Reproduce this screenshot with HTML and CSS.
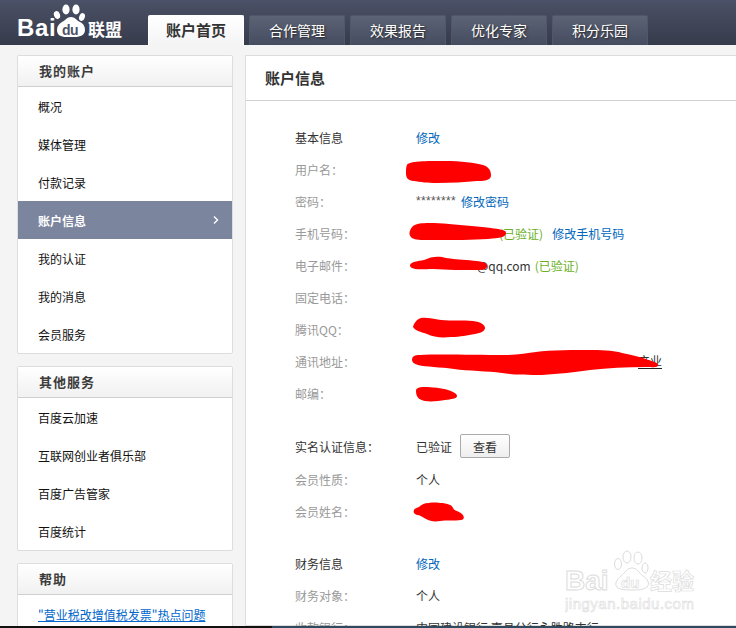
FILE: index.html
```html
<!DOCTYPE html>
<html lang="zh-CN">
<head>
<meta charset="utf-8">
<title>账户信息</title>
<link rel="stylesheet" href="styles.css">
</head>
<body>
<div class="page">
  <header class="topbar">
    <svg class="logo" width="110" height="45" viewBox="0 0 110 45">
      <text class="logo-bai" x="0" y="36">Bai</text>
      <ellipse cx="40" cy="15" rx="3" ry="4" fill="#fff" transform="rotate(-20 40 15)"/>
      <ellipse cx="49" cy="9.5" rx="3.6" ry="5" fill="#fff"/>
      <ellipse cx="59" cy="9.5" rx="3.6" ry="5" fill="#fff"/>
      <ellipse cx="65" cy="17" rx="2.8" ry="4" fill="#fff" transform="rotate(20 65 17)"/>
      <path d="M54 17c4 0 5 3 9 5 4 2 5 5 5 8 0 5-5 7-10 7H49c-5 0-9-2-9-7 0-4 2-6 5-8 4-2 5-5 9-5z" fill="#fff"/>
      <text class="logo-du" x="45" y="35">du</text>
      <text class="logo-lm" x="71" y="36">联盟</text>
    </svg>
    <nav class="tabs">
      <a class="tab tab-active">账户首页</a>
      <a class="tab">合作管理</a>
      <a class="tab">效果报告</a>
      <a class="tab">优化专家</a>
      <a class="tab">积分乐园</a>
    </nav>
  </header>

  <div class="body-row">
    <aside class="sidebar">
      <section class="card">
        <h3 class="card-title">我的账户</h3>
        <ul class="menu">
          <li class="menu-item">概况</li>
          <li class="menu-item">媒体管理</li>
          <li class="menu-item">付款记录</li>
          <li class="menu-item menu-active">账户信息
            <svg class="chev" width="6" height="8" viewBox="0 0 6 8"><path d="M1 .5 4.5 4 1 7.5" fill="none" stroke="#fff" stroke-width="1.4"/></svg>
          </li>
          <li class="menu-item">我的认证</li>
          <li class="menu-item">我的消息</li>
          <li class="menu-item">会员服务</li>
        </ul>
      </section>
      <section class="card">
        <h3 class="card-title">其他服务</h3>
        <ul class="menu">
          <li class="menu-item">百度云加速</li>
          <li class="menu-item">互联网创业者俱乐部</li>
          <li class="menu-item">百度广告管家</li>
          <li class="menu-item">百度统计</li>
        </ul>
      </section>
      <section class="card">
        <h3 class="card-title">帮助</h3>
        <a class="help-link">"营业税改增值税发票"热点问题</a>
      </section>
    </aside>

    <main class="panel">
      <h2 class="panel-title">账户信息</h2>
      <div class="panel-body">
        <div class="group">
          <div class="row"><span class="head">基本信息</span><span><a class="link">修改</a></span></div>
          <div class="row"><span class="label">用户名：</span><span></span></div>
          <div class="row"><span class="label">密码：</span><span class="val"><span class="stars">********</span><a class="link">修改密码</a></span></div>
          <div class="row"><span class="label">手机号码：</span><span class="val val-phone"><span class="ok">(已验证)</span><a class="link link-gap">修改手机号码</a></span></div>
          <div class="row"><span class="label">电子邮件：</span><span class="val val-mail">@qq.com <span class="ok">(已验证)</span></span></div>
          <div class="row"><span class="label">固定电话：</span><span></span></div>
          <div class="row"><span class="label">腾讯QQ：</span><span></span></div>
          <div class="row"><span class="label">通讯地址：</span><span class="val val-addr"><span class="addr-end">产业</span></span></div>
          <div class="row"><span class="label">邮编：</span><span></span></div>
        </div>
        <div class="group">
          <div class="row row-tall"><span class="head">实名认证信息：</span><span class="val">已验证<button class="btn">查看</button></span></div>
          <div class="row"><span class="label">会员性质：</span><span class="val">个人</span></div>
          <div class="row"><span class="label">会员姓名：</span><span></span></div>
        </div>
        <div class="group">
          <div class="row"><span class="head">财务信息</span><span><a class="link">修改</a></span></div>
          <div class="row"><span class="label">财务对象：</span><span class="val">个人</span></div>
          <div class="row"><span class="label">收款银行：</span><span class="val">中国建设银行 嘉县分行永胜路支行</span></div>
        </div>
      </div>
    </main>
  </div>
  <div class="taskbar"></div>
</div>

<svg class="scribbles" width="736" height="628" viewBox="0 0 736 628" fill="#f00">
  <path d="M407 165c1-4 20-4 38-4 16 0 30 2 38 4 6 2 8 6 8 10 0 4-3 6-14 6-12 1-26 2-40 2-10 0-16-1-24-2-6-1-7-4-7-8s0-6 1-8z"/>
  <path d="M413 226c6-4 20-3 36-2 14 1 32 3 42 4 8 1 15 2 15 5 0 4-6 5-18 6-14 1-36 1-50 1-12 0-24 1-27-3-3-3-1-8 2-11z"/>
  <path d="M410 265c1-3 8-4 14-5 6-3 12-4 18-3 8 2 14 2 24 3 10 1 20 1 21 5 1 4-3 5-10 5-14 0-30 0-44-1-8 0-18 1-21-1-2-1-2-2-2-3z"/>
  <path d="M413 327c1-4 4-8 8-9 6-1 12 1 20 2 10 1 22 0 32 1 8 1 12 4 12 7s-4 5-10 6c-8 1-14 3-24 3-10 1-18 0-24-3-5-2-12-3-14-7z"/>
  <path d="M412 360c0-4 3-5 8-5 18-1 54 0 86 0 12 0 22-2 30-3 14-2 40-2 56-2 14 0 24 1 30 3 10 2 18 4 24 6 4 2 12 3 12 6 0 3-4 2-12 2-20 0-38 1-56 3-14 2-32 4-48 5-16 0-28 0-40-2-14-2-34-2-48-4-14-2-28-2-36-4-4-1-6-3-6-5z"/>
  <path d="M416 391c0-3 3-4 8-4 8 0 18 1 24 3 6 2 9 4 9 6 0 3-6 3-12 4-6 1-14 2-20 1-6-1-9-4-9-10z"/>
  <path d="M414 510c1-2 3-2 5-3 2-2 5-4 10-4 5-1 10 0 14 0 5 1 9 2 10 5 1 3 6 3 9 6 3 3 2 6-1 6-6 1-15 0-21 1-6 1-10 0-14-2-4-2-6-4-9-4-3-1-4-3-3-5z"/>
</svg>

<svg class="watermark" width="140" height="70" viewBox="0 0 140 70">
  <text class="wm-big" x="0" y="40">Bai</text>
  <ellipse cx="53" cy="14" rx="3.5" ry="5.5" class="wm-shape"/>
  <ellipse cx="62" cy="7" rx="4" ry="6" class="wm-shape"/>
  <ellipse cx="73" cy="8" rx="4" ry="6" class="wm-shape"/>
  <ellipse cx="80" cy="18" rx="3" ry="5" class="wm-shape"/>
  <path d="M67 18c5 0 7 5 11 8 5 3 7 8 4 11-4 3-9 3-15 3s-12 0-15-3c-3-3 0-8 4-11s6-8 11-8z" class="wm-shape"/>
  <text class="wm-du" x="56" y="38">du</text>
  <text class="wm-cn" x="85" y="39">经验</text>
  <text class="wm-url" x="0" y="59">jingyan.baidu.com</text>
</svg>
</body>
</html>
```
FILE: styles.css
```css
* { box-sizing: border-box; }
html, body { margin: 0; padding: 0; }
body {
  position: relative;
  width: 736px;
  height: 628px;
  overflow: hidden;
  background: #f4f4f4;
  font-family: "Noto Sans CJK SC", "Liberation Sans", sans-serif;
  font-size: 12px;
  color: #333;
}
.page { display: flex; flex-direction: column; height: 628px; }

.topbar {
  flex: none;
  height: 45px;
  display: flex;
  background: linear-gradient(#4b5166, #363b4b);
  padding-left: 17px;
}
.logo { flex: none; }
.logo-bai { font: bold 24px "Liberation Sans", sans-serif; letter-spacing: .6px; fill: #fff; }
.logo-du { font: bold 14px "Liberation Sans", sans-serif; fill: #4d5265; letter-spacing: -.5px; }
.logo-lm { font: bold 17px "Noto Sans CJK SC", sans-serif; fill: #fff; }
.tabs { display: flex; gap: 5px; margin-left: 21px; padding-top: 15px; }
.tab {
  width: 96px;
  height: 30px;
  display: flex;
  align-items: center;
  justify-content: center;
  padding-bottom: 2px;
  font-size: 14px;
  color: #fff;
  background: linear-gradient(#5b6375, #464c60);
  border: 1px solid #50576b;
  border-bottom: 0;
  border-radius: 2px 2px 0 0;
  text-shadow: 1px 1px 2px #222;
}
.tab-active {
  background: linear-gradient(#fff, #f4f4f4);
  border-color: #fff;
  color: #333;
  font-size: 15px;
  font-weight: 700;
  text-shadow: none;
}

.body-row { flex: 1; min-height: 0; display: flex; gap: 12px; padding: 10px 0 0 17px; overflow: hidden; }

.sidebar { flex: none; width: 216px; display: flex; flex-direction: column; gap: 12px; }
.card { flex: none; background: #fff; border: 1px solid #ddd; border-radius: 2px; }
.card-title {
  margin: 0;
  height: 31px;
  padding-left: 21px;
  line-height: 29px;
  font-size: 13px;
  letter-spacing: 1px;
  font-weight: 700;
  color: #3c3c3c;
  background: linear-gradient(#fff, #f1f1f1);
  border-bottom: 1px solid #d0d0d0;
}
.menu { list-style: none; margin: 0; padding: 0; }
.menu-item {
  height: 38px;
  display: flex;
  align-items: center;
  justify-content: space-between;
  padding: 0 13px 0 20px;
  color: #111;
}
.menu-active { background: #7b859e; color: #fff; font-weight: 700; }
.chev { flex: none; }
.help-link {
  display: block;
  padding: 11px 0 20px 20px;
  color: #0066cc;
  text-decoration: underline;
  white-space: nowrap;
}

.panel { flex: 1; min-width: 0; background: #fff; border: 1px solid #ddd; border-right: 0; }
.panel-title {
  margin: 0;
  height: 45px;
  padding-left: 19px;
  line-height: 43px;
  font-size: 15px;
  font-weight: 700;
  color: #333;
  border-bottom: 1px solid #d0d0d0;
}
.panel-body { padding: 20px 0 0 49px; }
.group + .group { margin-top: 20px; }
.row {
  display: grid;
  grid-template-columns: 121px 1fr;
  align-items: center;
  height: 32px;
  white-space: nowrap;
}
.row-tall { height: 34px; }
.label { color: #999; }
.head { color: #333; }
.val { color: #333; display: flex; align-items: center; }
.link { color: #0066bb; }
.ok { color: #6aaf1e; }
.stars { font-family: "Liberation Sans", sans-serif; letter-spacing: .33px; color: #555; margin-right: 5px; }
.val-phone { padding-left: 83px; }
.link-gap { margin-left: 9px; }
.val-mail { padding-left: 61px; }
.val-mail .ok { margin-left: 4px; }
.val-addr { padding-left: 222px; }
.addr-end { border-bottom: 1px solid #222; line-height: 14px; }
.btn {
  width: 50px;
  height: 24px;
  margin-left: 8px;
  padding: 0;
  font: 12px "Noto Sans CJK SC", sans-serif;
  color: #333;
  background: linear-gradient(#fff, #eee);
  border: 1px solid #aaa;
  border-radius: 2px;
}

.taskbar { flex: none; height: 2px; background: linear-gradient(90deg, #111 0 37%, #2f4a5c 37%); }

.scribbles { position: absolute; left: 0; top: 0; pointer-events: none; }
.watermark { position: absolute; left: 565px; top: 550px; pointer-events: none; }
.wm-big { font: bold 28px "Liberation Sans", sans-serif; fill: #fff; stroke: #dcdcdc; stroke-width: 1; }
.wm-du { font: bold 15px "Liberation Sans", sans-serif; fill: #fff; stroke: #dcdcdc; stroke-width: .7; }
.wm-cn { font: 700 22px "Noto Sans CJK SC", sans-serif; fill: #fff; stroke: #dcdcdc; stroke-width: .7; }
.wm-url { font: 15px "Liberation Sans", sans-serif; letter-spacing: .5px; fill: #fff; stroke: #dcdcdc; stroke-width: .6; }
.wm-shape { fill: #fff; stroke: #dcdcdc; stroke-width: 1; }
```
